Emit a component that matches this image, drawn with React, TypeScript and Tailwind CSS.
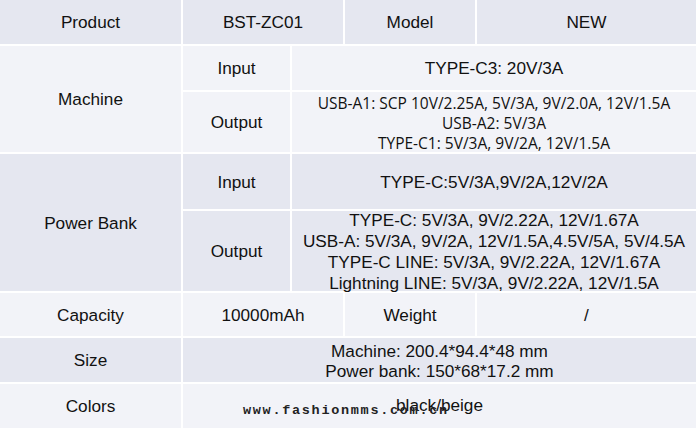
import React from "react";

const dark = "bg-[#e5e7f0]";
const light = "bg-[#f2f3f8]";
const cell = "flex flex-col items-center justify-center text-center pt-[2px]";

export default function App() {
  return (
    <div className="relative w-[696px] h-[428px] overflow-hidden bg-white text-[#111] [font-family:'Liberation_Sans',Arial,sans-serif] text-[17.2px]">
      <div className="grid grid-cols-[181px_107px_51px_130px_219px] grid-rows-[44px_44px_60px_55px_80px_43px_44px_44px] gap-[2px] bg-white">
        <div className={`${cell} ${dark}`}>Product</div>
        <div className={`${cell} ${dark} col-span-2`}>BST-ZC01</div>
        <div className={`${cell} ${dark}`}>Model</div>
        <div className={`${cell} ${dark}`}>NEW</div>

        <div className={`${cell} ${light} row-span-2`}>Machine</div>
        <div className={`${cell} ${light}`}>Input</div>
        <div className={`${cell} ${light} col-span-3`}>TYPE-C3: 20V/3A</div>
        <div className={`${cell} ${light}`}>Output</div>
        <div className={`${cell} ${light} col-span-3 text-[15.5px] leading-[20px] [font-family:'Open_Sans',sans-serif]`}>
          <span>USB-A1: SCP 10V/2.25A, 5V/3A, 9V/2.0A, 12V/1.5A</span>
          <span>USB-A2: 5V/3A</span>
          <span>TYPE-C1: 5V/3A, 9V/2A, 12V/1.5A</span>
        </div>

        <div className={`${cell} ${dark} row-span-2`}>Power Bank</div>
        <div className={`${cell} ${dark}`}>Input</div>
        <div className={`${cell} ${dark} col-span-3`}>TYPE-C:5V/3A,9V/2A,12V/2A</div>
        <div className={`${cell} ${dark}`}>Output</div>
        <div className={`${cell} ${dark} col-span-3 leading-[21px]`}>
          <span>TYPE-C: 5V/3A, 9V/2.22A, 12V/1.67A</span>
          <span>USB-A: 5V/3A, 9V/2A, 12V/1.5A,4.5V/5A, 5V/4.5A</span>
          <span>TYPE-C LINE: 5V/3A, 9V/2.22A, 12V/1.67A</span>
          <span>Lightning LINE: 5V/3A, 9V/2.22A, 12V/1.5A</span>
        </div>

        <div className={`${cell} ${light}`}>Capacity</div>
        <div className={`${cell} ${light} col-span-2`}>10000mAh</div>
        <div className={`${cell} ${light}`}>Weight</div>
        <div className={`${cell} ${light}`}>/</div>

        <div className={`${cell} ${dark}`}>Size</div>
        <div className={`${cell} ${dark} col-span-4 leading-[20px]`}>
          <span>Machine: 200.4*94.4*48 mm</span>
          <span>Power bank: 150*68*17.2 mm</span>
        </div>

        <div className={`${cell} ${light}`}>Colors</div>
        <div className={`${cell} ${light} col-span-4 pb-[2px]`}>black/beige</div>
      </div>
      <div className="absolute left-[243px] top-[403px] text-[13.5px] leading-[16px] font-bold tracking-[1.7px] text-[#222] [font-family:'Liberation_Mono',monospace]">
        www.fashionmms.com.cn
      </div>
    </div>
  );
}
